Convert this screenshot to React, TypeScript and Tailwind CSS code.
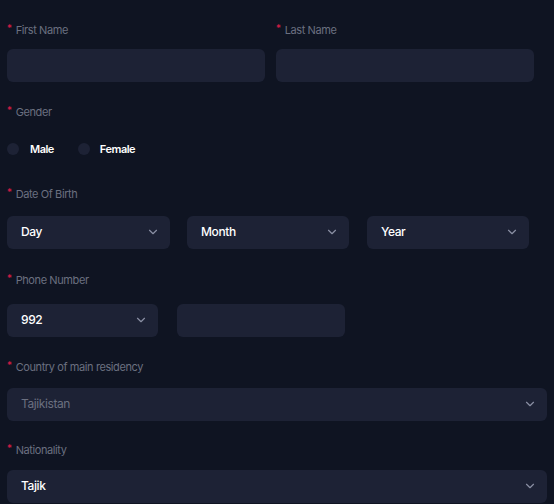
import { ChevronDown } from 'lucide-react'

const Label = ({ text, className = '' }: { text: string; className?: string }) => (
  <div className={`flex items-start gap-[4px] text-[11px] leading-[14px] text-[#6b7080] tracking-[-0.4px] ${className}`}>
    <span className="text-[#e11d48] text-[10px] leading-[10px]">*</span>
    <span>{text}</span>
  </div>
)

const Select = ({ value, className = '', muted = false }: { value: string; className?: string; muted?: boolean }) => (
  <div className={`h-[33px] rounded-md bg-[#1d2235] flex items-center justify-between pl-[14px] pr-[10px] ${className}`}>
    <span className={`text-[12px] tracking-[-0.4px] ${muted ? 'text-[#6b7080]' : 'text-white font-medium'}`}>{value}</span>
    <ChevronDown className="h-[14px] w-[14px] text-[#8a8fa3]" strokeWidth={2} />
  </div>
)

export default function App() {
  return (
    <div className="w-[554px] h-[504px] overflow-hidden bg-[#0f1422] pl-[7px] pt-[23px]" style={{ fontFamily: 'Inter, "Liberation Sans", sans-serif' }}>
      <div className="flex gap-[11px] w-[527px]">
        <div className="flex-1">
          <Label text="First Name" />
          <div className="mt-[12px] h-[33px] rounded-md bg-[#1d2235]" />
        </div>
        <div className="flex-1">
          <Label text="Last Name" />
          <div className="mt-[12px] h-[33px] rounded-md bg-[#1d2235]" />
        </div>
      </div>

      <Label text="Gender" className="mt-[23px]" />
      <div className="mt-[22px] flex items-center text-[11px] text-white font-semibold tracking-[-0.5px]">
        <span className="w-[12px] h-[12px] rounded-full bg-[#1d2235]" />
        <span className="ml-[11px]">Male</span>
        <span className="ml-[24px] w-[12px] h-[12px] rounded-full bg-[#1d2235]" />
        <span className="ml-[10px]">Female</span>
      </div>

      <Label text="Date Of Birth" className="mt-[29px]" />
      <div className="mt-[15px] flex">
        <Select value="Day" className="w-[163px]" />
        <Select value="Month" className="w-[162px] ml-[17px]" />
        <Select value="Year" className="w-[162px] ml-[18px]" />
      </div>

      <Label text="Phone Number" className="mt-[24px]" />
      <div className="mt-[17px] flex">
        <Select value="992" className="w-[151px]" />
        <div className="ml-[19px] w-[168px] h-[33px] rounded-md bg-[#1d2235]" />
      </div>

      <Label text="Country of main residency" className="mt-[23px]" />
      <Select value="Tajikistan" muted className="mt-[14px] w-[540px]" />

      <Label text="Nationality" className="mt-[22px]" />
      <Select value="Tajik" className="mt-[13px] w-[540px]" />
    </div>
  )
}
